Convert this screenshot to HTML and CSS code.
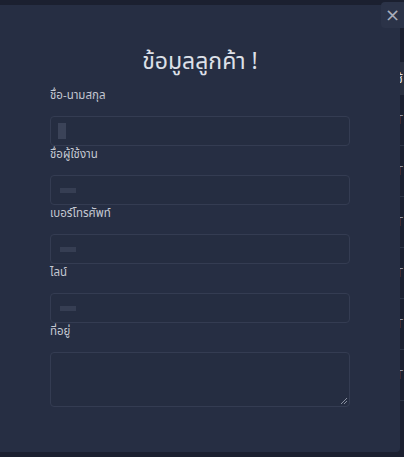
FILE: index.html
```html
<!DOCTYPE html>
<html lang="th">
<head>
<meta charset="utf-8">
<link rel="stylesheet" href="styles.css">
</head>
<body>
<div class="page">
  <table class="bg-table">
    <thead><tr><th>ชื่อผู้ใช้งาน</th><th>ผู้ใช้</th></tr></thead>
    <tbody>
      <tr><td></td><td>EDIT</td></tr>
      <tr><td></td><td>EDIT</td></tr>
      <tr><td></td><td>EDIT</td></tr>
      <tr><td></td><td>EDIT</td></tr>
      <tr><td></td><td>EDIT</td></tr>
      <tr><td></td><td>EDIT</td></tr>
    </tbody>
  </table>
</div>
<div class="modal">
  <h2 class="modal-title">ข้อมูลลูกค้า !</h2>
  <form class="form">
    <div class="group">
      <label class="label">ชื่อ-นามสกุล</label>
      <div class="input"><span class="blur blur-a"></span></div>
    </div>
    <div class="group">
      <label class="label">ชื่อผู้ใช้งาน</label>
      <div class="input"><span class="blur blur-b"></span></div>
    </div>
    <div class="group">
      <label class="label">เบอร์โทรศัพท์</label>
      <div class="input"><span class="blur blur-b"></span></div>
    </div>
    <div class="group">
      <label class="label">ไลน์</label>
      <div class="input"><span class="blur blur-b"></span></div>
    </div>
    <div class="group">
      <label class="label">ที่อยู่</label>
      <div class="textarea">
        <svg class="grip" width="8" height="8" viewBox="0 0 8 8"><path d="M7 1L1 7M7 4L4 7" stroke="#8a90a0" stroke-width="1"/></svg>
      </div>
    </div>
  </form>
</div>
<button class="close" type="button">×</button>
</body>
</html>
```
FILE: styles.css
```css
html, body {
  margin: 0;
  padding: 0;
  width: 404px;
  height: 457px;
  overflow: hidden;
  background: #1b2030;
  font-family: "Noto Sans Thai", "Noto Sans", "DejaVu Sans", sans-serif;
}
.page {
  padding-top: 62px;
}
.bg-table {
  width: 404px;
  border-collapse: collapse;
  color: #8d93a3;
  font-size: 13px;
}
.bg-table th {
  height: 31px;
  background: #2a3040;
  color: #e0e2e8;
  text-align: right;
  font-weight: normal;
}
.bg-table td {
  height: 48px;
  border-bottom: 1px solid #2c3344;
  text-align: left;
}
.bg-table td:last-child {
  width: 4px;
  padding-left: 0;
}
.bg-table th:first-child, .bg-table td:first-child {
  width: 400px;
}
.modal {
  position: fixed;
  left: 0;
  top: 5px;
  width: 300px;
  height: 447px;
  padding: 0 50px;
  background: #262e43;
  border-radius: 0 0 4px 0;
}
.modal-title {
  margin: 38px 0 6px;
  height: 38px;
  line-height: 38px;
  text-align: center;
  font-size: 23px;
  font-weight: normal;
  color: #dde0e8;
}
.form {
  display: flex;
  flex-direction: column;
}
.label {
  display: block;
  height: 17px;
  line-height: 17px;
  margin-bottom: 12px;
  font-size: 11.5px;
  color: #c4c8d2;
}
.input {
  box-sizing: border-box;
  height: 30px;
  border: 1px solid #343c52;
  border-radius: 4px;
  background: #252d41;
  position: relative;
}
.textarea {
  box-sizing: border-box;
  height: 55px;
  border: 1px solid #343c52;
  border-radius: 4px;
  background: #252d41;
  position: relative;
}
.grip {
  position: absolute;
  right: 1px;
  bottom: 1px;
}
.blur {
  position: absolute;
  display: block;
}
.blur-a {
  left: 7px;
  top: 6px;
  width: 8px;
  height: 16px;
  background: #3b4358;
}
.blur-b {
  left: 9px;
  top: 12px;
  width: 16px;
  height: 5px;
  background: #363e53;
}
.close {
  position: fixed;
  left: 381px;
  top: 2px;
  width: 26px;
  height: 26px;
  padding: 0 3px 0 0;
  border: none;
  border-radius: 4px;
  background: #2b3348;
  color: #a9aebb;
  font-size: 18px;
  line-height: 24px;
  font-family: "DejaVu Sans", sans-serif;
}
```
